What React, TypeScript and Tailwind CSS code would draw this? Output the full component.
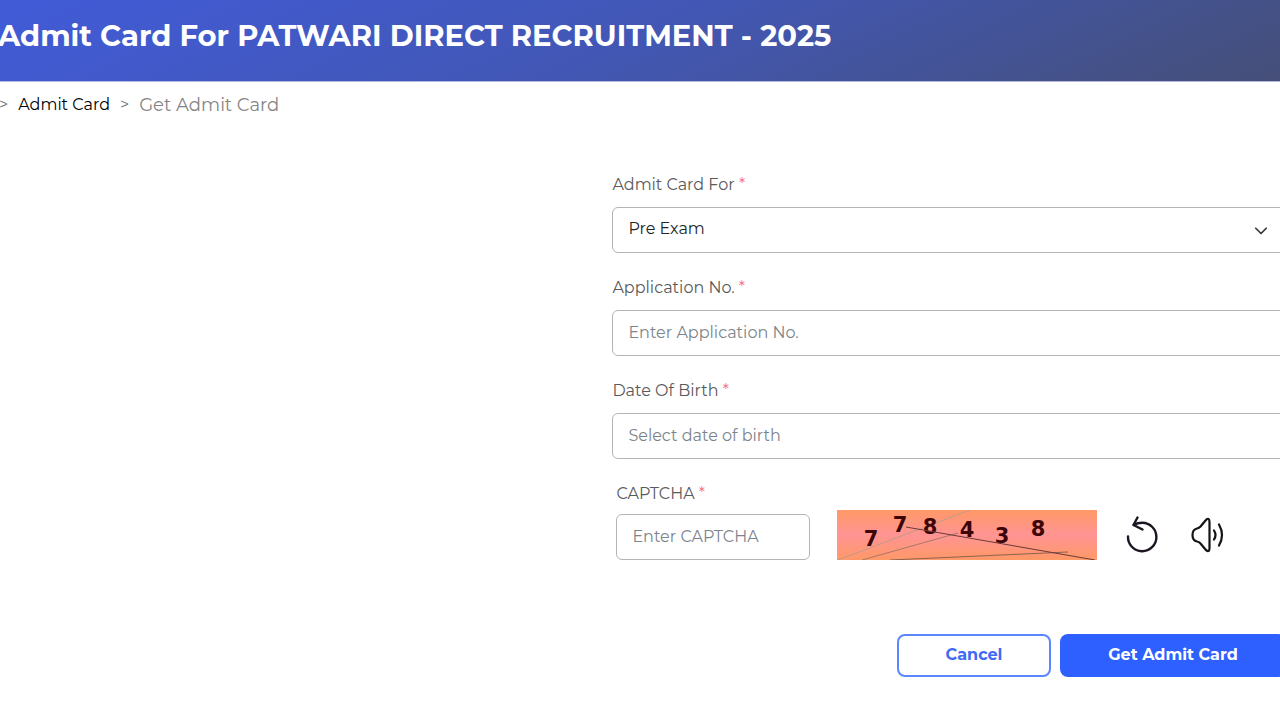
import { useState } from "react";
import type { ReactNode } from "react";

const digits = [
  { value: "7", x: 34, y: 36 },
  { value: "7", x: 63, y: 22 },
  { value: "8", x: 93, y: 24 },
  { value: "4", x: 130, y: 27 },
  { value: "3", x: 165, y: 33 },
  { value: "8", x: 201, y: 26 },
];

const fieldClass =
  "block h-[46px] w-full rounded-md border border-[#b4b4b4] bg-white px-[15px] pb-0.5 text-base text-[#212529] outline-none placeholder:text-[#7c848b] placeholder:opacity-100";

const Label = ({ htmlFor, children }: { htmlFor: string; children: ReactNode }) => (
  <label htmlFor={htmlFor} className="block text-base leading-6 text-[#5a5a5a]">
    {children} <span className="text-[#f57680]">*</span>
  </label>
);

const CaptchaImage = () => (
  <svg width="260" height="50" viewBox="0 0 260 50" className="shrink-0" role="img">
    <defs>
      <linearGradient id="captchaBg" x1="0" y1="0" x2="0" y2="1">
        <stop offset="0" stopColor="#ff9966" />
        <stop offset="0.5" stopColor="#ff9494" />
        <stop offset="1" stopColor="#ff9966" />
      </linearGradient>
    </defs>
    <rect width="260" height="50" fill="url(#captchaBg)" />
    <path d="M1 50L133 0" stroke="#c19a88" fill="none" />
    <path d="M25 50L121 23" stroke="#a8786a" fill="none" />
    <path d="M53 50L231 42" stroke="#8c6252" fill="none" />
    {digits.map((d, i) => (
      <text
        key={i}
        x={d.x}
        y={d.y}
        textAnchor="middle"
        fill="#3d0508"
        className="font-['DejaVu_Sans',sans-serif] text-[21px] font-bold"
      >
        {d.value}
      </text>
    ))}
    <path d="M69 17L258 50" stroke="#6b3a3a" fill="none" />
  </svg>
);

const App = () => {
  const [applicationNo, setApplicationNo] = useState("");
  const [dob, setDob] = useState("");
  const [captcha, setCaptcha] = useState("");

  return (
    <div className="min-h-screen overflow-x-hidden bg-white font-[Montserrat,Inter,sans-serif]">
      <header className="border-b border-[#b3b8dc] bg-linear-[155deg,#415bd8,#4257b4_50%,#454f78] pt-[13px] pb-[23px]">
        <h1 className="-ml-0.5 text-[29px] leading-[45px] font-bold whitespace-nowrap text-white">
          Admit Card For PATWARI DIRECT RECRUITMENT - 2025
        </h1>
      </header>

      <nav className="flex items-center gap-2.5 pt-[11px] text-base leading-6 text-[#6c757d]">
        <span className="-ml-px">&gt;</span>
        <a href="#admit-card" className="text-black">Admit Card</a>
        <span>&gt;</span>
        <span className="text-lg leading-6 text-[#858585]">Get Admit Card</span>
      </nav>

      <form className="mt-14 ml-[48%] flex flex-col" onSubmit={(e) => e.preventDefault()}>
        <div className="-mr-4 -ml-0.5 flex flex-col gap-[23px]">
          <div className="flex flex-col gap-2.5">
            <Label htmlFor="examType">Admit Card For</Label>
            <div className="relative">
              <select id="examType" className={`${fieldClass} appearance-none`}>
                <option>Pre Exam</option>
              </select>
              <svg
                viewBox="0 0 16 16"
                className="pointer-events-none absolute top-4 right-7 size-[14px]"
                fill="none"
                stroke="#343a40"
                strokeWidth="2"
                strokeLinecap="round"
                strokeLinejoin="round"
              >
                <path d="m2 6 6 6 6-6" />
              </svg>
            </div>
          </div>
          <div className="flex flex-col gap-2.5">
            <Label htmlFor="applicationNo">Application No.</Label>
            <input
              id="applicationNo"
              className={fieldClass}
              placeholder="Enter Application No."
              value={applicationNo}
              onChange={(e) => setApplicationNo(e.target.value)}
            />
          </div>
          <div className="flex flex-col gap-2.5">
            <Label htmlFor="dob">Date Of Birth</Label>
            <input
              id="dob"
              className={fieldClass}
              placeholder="Select date of birth"
              value={dob}
              onChange={(e) => setDob(e.target.value)}
            />
          </div>
        </div>

        <div className="mt-[23px] ml-0.5 flex items-end">
          <div className="flex w-[194px] shrink-0 flex-col gap-2">
            <Label htmlFor="captcha">CAPTCHA</Label>
            <input
              id="captcha"
              className={fieldClass}
              placeholder="Enter CAPTCHA"
              value={captcha}
              onChange={(e) => setCaptcha(e.target.value)}
            />
          </div>
          <div className="ml-[27px] flex items-center">
            <CaptchaImage />
            <button type="button" aria-label="Refresh captcha" className="ml-7">
              <svg
                width="34"
                height="38"
                viewBox="0 0 34 38"
                fill="none"
                stroke="#1d1522"
                strokeWidth="2.4"
                strokeLinecap="round"
                strokeLinejoin="round"
              >
                <path d="M3 20.5A14.200 14.200 0 1 0 17.200 6.800Q12.500 6.800 8.700 9" />
                <path d="M12.500 1.500 8.500 9 17.500 13.500" />
              </svg>
            </button>
            <button type="button" aria-label="Play captcha audio" className="ml-[31px]">
              <svg
                width="36"
                height="38"
                viewBox="0 0 36 38"
                fill="none"
                stroke="#141414"
                strokeWidth="2.2"
                strokeLinecap="round"
                strokeLinejoin="round"
              >
                <path d="M7 12.500Q9 12.200 10.500 10.500L15.500 4.500Q17 2.500 18.500 3Q19.500 3.500 19.500 6V32Q19.500 34.500 18.500 35Q17 35.500 15.500 33.500L10.500 27.500Q9 25.800 7 25.500Q2.500 24.500 2.500 19Q2.500 13.500 7 12.500Z" />
                <path d="M24 14.500Q27 19 24 23.500" />
                <path d="M29 8.500Q35 19 29 29.500" />
              </svg>
            </button>
          </div>
        </div>

        <div className="-mr-1.5 mt-[74px] flex justify-end gap-[9px] text-base font-bold">
          <button
            type="button"
            className="h-[43px] w-[154px] rounded-lg border-2 border-[#5b86ff] bg-white pb-0.5 text-[#3f6af5]"
          >
            Cancel
          </button>
          <button type="submit" className="h-[43px] w-[226px] rounded-lg bg-[#2d60ff] pb-0.5 text-white">
            Get Admit Card
          </button>
        </div>
      </form>
    </div>
  );
};

export default App;
